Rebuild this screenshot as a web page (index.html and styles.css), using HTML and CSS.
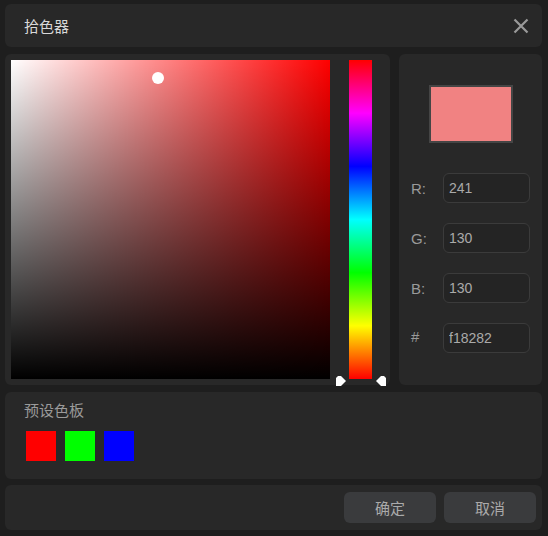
FILE: index.html
```html
<!DOCTYPE html>
<html lang="zh">
<head>
<meta charset="utf-8">
<title>拾色器</title>
<link rel="stylesheet" href="styles.css">
</head>
<body>
<div class="dialog">
  <div class="panel titlebar">
    <span class="title">拾色器</span>
    <svg class="close" width="16" height="16" viewBox="0 0 16 16"><path d="M1.5 1.5 L14.5 14.5 M14.5 1.5 L1.5 14.5" stroke="#9a9a9a" stroke-width="2.2" fill="none"/></svg>
  </div>
  <div class="main">
    <div class="panel picker">
      <div class="sv">
        <div class="cursor"></div>
      </div>
      <div class="hue-wrap">
        <div class="hue"></div>
        <svg class="arrow arrow-left" width="10" height="10" viewBox="0 0 10 10"><polygon points="2,0 5,0 10,5 5,10 0,10 0,2" fill="#fff"/></svg>
        <svg class="arrow arrow-right" width="10" height="10" viewBox="0 0 10 10"><polygon points="8,0 5,0 0,5 5,10 10,10 10,2" fill="#fff"/></svg>
      </div>
    </div>
    <div class="panel values">
      <div class="preview"></div>
      <div class="row"><span class="label">R:</span><input class="field" value="241"></div>
      <div class="row"><span class="label">G:</span><input class="field" value="130"></div>
      <div class="row"><span class="label">B:</span><input class="field" value="130"></div>
      <div class="row"><span class="label label-hash">#</span><input class="field" value="f18282"></div>
    </div>
  </div>
  <div class="panel presets">
    <div class="presets-title">预设色板</div>
    <div class="swatches">
      <div class="swatch swatch-red"></div>
      <div class="swatch swatch-green"></div>
      <div class="swatch swatch-blue"></div>
    </div>
  </div>
  <div class="panel footer">
    <button class="btn">确定</button>
    <button class="btn">取消</button>
  </div>
</div>
</body>
</html>
```
FILE: styles.css
```css
html, body {
  margin: 0;
  padding: 0;
  background: #1e1e1e;
}
body {
  width: 548px;
  height: 536px;
  overflow: hidden;
  font-family: "Liberation Sans", "Noto Sans CJK SC", sans-serif;
}
.dialog {
  box-sizing: border-box;
  width: 548px;
  height: 536px;
  padding: 4px 6px 6px 5px;
  display: flex;
  flex-direction: column;
}
.panel {
  background: #282828;
  border-radius: 6px;
  box-sizing: border-box;
}
.titlebar {
  height: 43px;
  display: flex;
  align-items: center;
  justify-content: space-between;
  padding: 0 13px 0 19px;
}
.title {
  font-family: "Noto Sans CJK SC", sans-serif;
  font-size: 15px;
  line-height: 20px;
  color: #d8d8d8;
}
.close {
  display: block;
}
.main {
  margin-top: 7px;
  height: 331px;
  display: flex;
  gap: 9px;
}
.picker {
  width: 385px;
  height: 331px;
  padding: 6px 0 0 6px;
  display: flex;
  align-items: flex-start;
  gap: 19px;
}
.sv {
  position: relative;
  width: 319px;
  height: 319px;
  background:
    linear-gradient(to top, #000, rgba(0,0,0,0)),
    linear-gradient(to right, #fff, rgba(255,255,255,0)),
    #ff0000;
}
.cursor {
  position: absolute;
  left: 141px;
  top: 12px;
  width: 12px;
  height: 12px;
  border-radius: 50%;
  background: #fff;
}
.hue-wrap {
  position: relative;
  width: 23px;
  height: 319px;
}
.hue {
  width: 23px;
  height: 319px;
  background: linear-gradient(to bottom, #ff0000 0%, #ff00ff 16.67%, #0000ff 33.33%, #00ffff 50%, #00ff00 66.67%, #ffff00 83.33%, #ff0000 100%);
}
.arrow {
  position: absolute;
  top: 316px;
  display: block;
}
.arrow-left {
  left: -13px;
}
.arrow-right {
  left: 27px;
}
.values {
  width: 143px;
  height: 331px;
  padding: 31px 12px 0 12px;
  display: flex;
  flex-direction: column;
}
.preview {
  align-self: center;
  width: 84px;
  height: 58px;
  box-sizing: border-box;
  border: 2px solid #454545;
  background: #f18282;
  margin-bottom: 30px;
}
.row {
  display: flex;
  align-items: center;
  justify-content: space-between;
  height: 30px;
  margin-bottom: 20px;
}
.label {
  font-size: 15px;
  color: #9a9a9a;
}
.label-hash {
  margin-top: -3px;
}
.field {
  box-sizing: border-box;
  width: 87px;
  height: 30px;
  border: 1px solid #3b3b3b;
  border-radius: 6px;
  background: #242424;
  color: #aaaaaa;
  font-family: "Liberation Sans", sans-serif;
  font-size: 14px;
  padding: 0 5px;
  outline: none;
}
.presets {
  margin-top: 7px;
  height: 87px;
  padding: 8px 19px 0 19px;
}
.presets-title {
  font-family: "Noto Sans CJK SC", sans-serif;
  font-size: 15px;
  line-height: 20px;
  color: #9a9a9a;
}
.swatches {
  display: flex;
  gap: 9px;
  margin-top: 11px;
  padding-left: 2px;
}
.swatch {
  width: 30px;
  height: 30px;
}
.swatch-red { background: #ff0000; }
.swatch-green { background: #00ff00; }
.swatch-blue { background: #0000ff; }
.footer {
  margin-top: 6px;
  height: 45px;
  display: flex;
  justify-content: flex-end;
  align-items: flex-start;
  gap: 8px;
  padding: 7px 6px 0 0;
}
.btn {
  width: 92px;
  height: 31px;
  border: none;
  border-radius: 6px;
  background: #3a3b3d;
  color: #aaaaaa;
  font-family: "Noto Sans CJK SC", sans-serif;
  font-size: 15px;
  padding: 0;
}
```
